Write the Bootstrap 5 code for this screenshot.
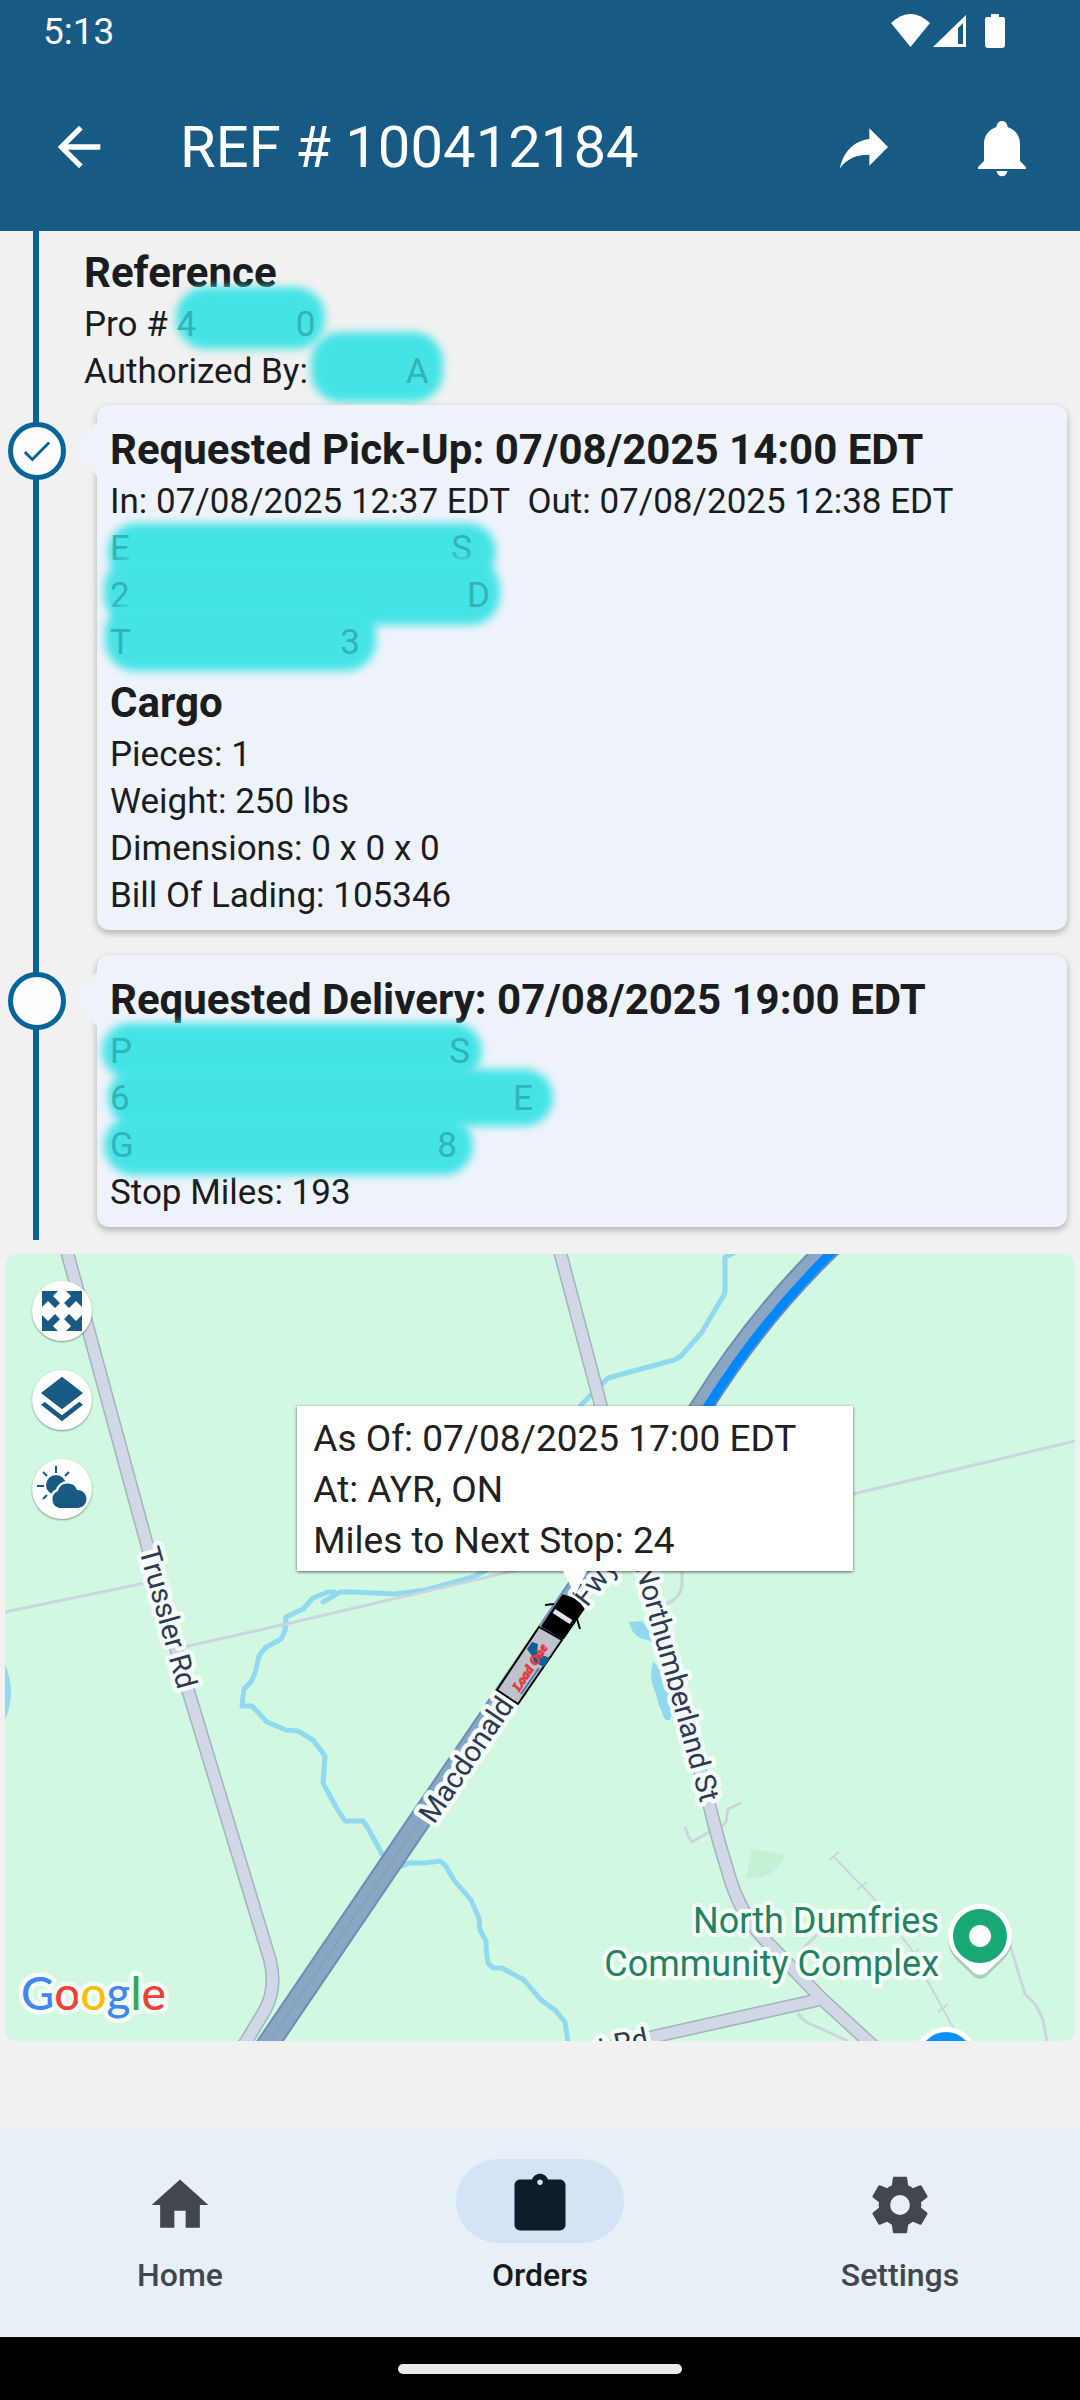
<!DOCTYPE html>
<html lang="en">
<head>
<meta charset="utf-8">
<meta name="viewport" content="width=device-width, initial-scale=1">
<title>REF # 100412184</title>
<link href="https://cdn.jsdelivr.net/npm/bootstrap@5.3.0/dist/css/bootstrap.min.css" rel="stylesheet">
<style>
  :root { --brand: #175a84; --rail: #056599; --ink: #1a1c1e; --smudge: #45e3e6; }
  body { font-family: Roboto, "Noto Sans", sans-serif; font-size: 35px; line-height: 47px; color: var(--ink); background: #f1f1f1; }
  svg { display: block; flex: none; }

  .app-head { background: var(--brand); color: #fff; }
  .status-row { height: 62px; padding: 0 75px 0 43px; font-size: 37px; }
  .tool-row { height: 169px; padding: 0 46px 0 47px; }
  .tool-row h1 { font-size: 58px; line-height: 68px; font-weight: 400; margin-left: 69px; }
  .tool-actions { gap: 74px; }
  .icon-btn { color: inherit; background: none; border: 0; padding: 0; }

  .timeline { position: relative; padding: 13px 13px 13px 0; }
  .timeline::before { content: ""; position: absolute; left: 33px; top: 0; bottom: 0; width: 6px; background: var(--rail); }
  .head-line { font-size: 42px; line-height: 57px; font-weight: 700; margin: 0; }
  .ref-block { padding-left: 84px; margin-bottom: 10px; position: relative; }
  .stop-row + .stop-row { margin-top: 25px; }
  .rail { flex: 0 0 97px; position: relative; padding: 17px 0 0 8px; }
  .node { width: 58px; height: 58px; border: 5px solid var(--rail); border-radius: 50%; background: #fdfcff; color: var(--rail); }
  .stop-card { position: relative; flex: 1; min-width: 0; background: #eef3fa; border-radius: 12px; padding: 16px 13px 11px; box-shadow: 0 3px 7px rgba(0,0,0,.28); }
  .stop-card::before { content: ""; position: absolute; left: -24px; top: 17px; border: solid transparent; border-width: 27px 24px 27px 0; border-right-color: #eef3fa; }
  .cargo { margin-top: 8px; }

  /* marker strokes that cover private values */
  .hidden-value { position: relative; display: inline-flex; justify-content: space-between; vertical-align: top; height: 47px; color: #31b3b8; }
  .hidden-value::before { content: ""; position: absolute; inset: var(--t, -6px) var(--r, -30px) var(--b, -8px) var(--l, -5px); background: var(--smudge); border-radius: 30px; filter: blur(4px); }
  .hidden-value span { position: relative; }
  .w-pro { width: 139px; --t: -14px; --r: -10px; --b: -1px; --l: 0px; }
  .w-auth { width: 112px; --t: -16px; --r: -14px; --b: -7px; --l: -6px; }
  .w-name { width: 362px; --t: -2px; --r: -24px; --b: -8px; --l: -2px; }
  .w-street { width: 380px; --t: -14px; --r: -10px; --b: -6px; --l: -6px; }
  .w-city { width: 250px; --t: -16px; --r: -16px; --b: -5px; --l: -5px; }
  .w-name2 { width: 360px; --t: -5px; --r: -12px; --b: -4px; --l: -8px; }
  .w-street2 { width: 423px; --t: -6px; --r: -20px; --b: -4px; --l: -2px; }
  .w-city2 { width: 347px; --t: -6px; --r: -16px; --b: -6px; --l: -6px; }

  .map-box { position: relative; margin: 14px 5px 0; border-radius: 10px; overflow: hidden; background: #d2f8e2; }
  .map-box > svg { width: 100%; height: auto; }
  .map-tools { position: absolute; left: 27px; top: 27px; gap: 29px; }
  .map-btn { width: 60px; height: 60px; border: 0; padding: 0; border-radius: 50%; background: #fff; color: var(--brand); box-shadow: 0 1px 2px rgba(0,0,0,.4); }
  .callout { position: absolute; left: 53.3%; top: 152px; transform: translateX(-50%); width: 556px; padding: 7px 16px 5px; background: #fff; color: #212121; font-size: 37px; line-height: 51px; box-shadow: 0 1px 3px rgba(0,0,0,.6); }
  .callout::after { content: ""; position: absolute; left: 50%; top: 100%; margin-left: -12px; border: 12px solid transparent; border-top: 24px solid #fff; border-bottom: 0; }
  .road-name { font-size: 29px; fill: #2f3a4f; stroke: #f3fbfb; stroke-width: 9px; stroke-linejoin: round; paint-order: stroke; }
  .place-name { font-size: 36px; fill: #23825f; stroke: #f3fdf8; stroke-width: 8px; stroke-linejoin: round; paint-order: stroke; }
  .brand-name { font-family: Lato, sans-serif; font-size: 46px; font-weight: 500; stroke: #f3fdf8; stroke-width: 9px; stroke-linejoin: round; paint-order: stroke; }
  .truck-name { font: italic 900 13px "Liberation Serif", serif; fill: #e23b40; stroke: #e23b40; stroke-width: 1px; }

  .bottom-nav { background: #e7eff7; padding: 32px 0 38px; margin-top: auto; }
  .bottom-nav a { color: #42474e; text-decoration: none; font-size: 32px; font-weight: 500; line-height: 48px; }
  .bottom-nav a.active { color: #16191c; }
  .pill { width: 168px; height: 84px; border-radius: 42px; padding-top: 8px; margin-bottom: 8px; }
  .active .pill { background: #d4e3f6; color: #0d1d2a; }
  .gesture { background: #000; height: 63px; }
  .gesture div { width: 284px; height: 10px; border-radius: 5px; background: #eaeaea; }
</style>
<script src="https://cdn.jsdelivr.net/npm/bootstrap@5.3.0/dist/js/bootstrap.bundle.min.js"></script>
</head>
<body class="d-flex flex-column min-vh-100">

<header class="app-head">
  <div class="status-row d-flex align-items-center justify-content-between">
    <span>5:13</span>
    <svg width="114" height="34" viewBox="0 0 114 34" fill="#fff" aria-hidden="true">
      <path d="M0 9Q19.500-9 39 9L19.500 33z"/>
      <path fill-rule="evenodd" d="M42 33L75 1v32zM67 14v16h5V9z"/>
      <path d="M100 0h8v3h4q2 0 2 3v25q0 3-3 3H97q-3 0-3-3V6q0-3 2-3h4z"/>
    </svg>
  </div>
  <div class="tool-row d-flex align-items-center">
    <button class="icon-btn" type="button" aria-label="Back"><svg width="64" height="64" viewBox="0 0 24 24" fill="currentColor"><path d="M20 11H7.830l5.590-5.590L12 4l-8 8 8 8 1.410-1.410L7.830 13H20z"/></svg></button>
    <h1 class="mb-0 me-auto">REF # 100412184</h1>
    <div class="tool-actions d-flex">
      <button class="icon-btn" type="button" aria-label="Share"><svg width="64" height="64" viewBox="0 0 24 24" fill="currentColor"><path d="M14 9V5l7 7-7 7v-4.100c-5 0-8.500 1.600-11 5.100 1-5 4-10 11-11z"/></svg></button>
      <button class="icon-btn" type="button" aria-label="Notifications"><svg width="64" height="64" viewBox="-8 -6 64 64" fill="currentColor"><path d="M24 0c3 0 5 2 5.500 5v1C38 9 42 15 42 23v17l6 6v2H0v-2l6-6V23C6 15 10 9 18.500 6V5c.500-3 2.500-5 5.500-5zM18.500 50h11c-1 7-10 7-11 0z"/></svg></button>
    </div>
  </div>
</header>

<main>
  <section class="timeline">
    <div class="ref-block">
      <h2 class="head-line">Reference</h2>
      <div>Pro # <span class="hidden-value w-pro"><span>4</span><span>0</span></span></div>
      <div>Authorized By: <span class="hidden-value w-auth"><span></span><span>A</span></span></div>
    </div>

    <div class="stop-row d-flex">
      <div class="rail">
        <div class="node d-flex align-items-center justify-content-center">
          <svg width="28" height="24" viewBox="0 0 30 24" fill="none" stroke="currentColor" stroke-width="3"><path d="M2 13l8 8L28 3"/></svg>
        </div>
      </div>
      <article class="stop-card">
        <h2 class="head-line">Requested Pick-Up: 07/08/2025 14:00 EDT</h2>
        <div>In: 07/08/2025 12:37 EDT&nbsp; Out: 07/08/2025 12:38 EDT</div>
        <div><span class="hidden-value w-name"><span>E</span><span>S</span></span></div>
        <div><span class="hidden-value w-street"><span>2</span><span>D</span></span></div>
        <div><span class="hidden-value w-city"><span>T</span><span>3</span></span></div>
        <div class="cargo">
          <h3 class="head-line">Cargo</h3>
          <div>Pieces: 1</div>
          <div>Weight: 250 lbs</div>
          <div>Dimensions: 0 x 0 x 0</div>
          <div>Bill Of Lading: 105346</div>
        </div>
      </article>
    </div>

    <div class="stop-row d-flex">
      <div class="rail"><div class="node"></div></div>
      <article class="stop-card">
        <h2 class="head-line">Requested Delivery: 07/08/2025 19:00 EDT</h2>
        <div><span class="hidden-value w-name2"><span>P</span><span>S</span></span></div>
        <div><span class="hidden-value w-street2"><span>6</span><span>E</span></span></div>
        <div><span class="hidden-value w-city2"><span>G</span><span>8</span></span></div>
        <div>Stop Miles: 193</div>
      </article>
    </div>
  </section>

  <section class="map-box" aria-label="Map">
    <svg viewBox="5 1254 1070 787">
      <!-- park and water -->
      <path fill="#c4f0d5" d="M752 1849l33 6q-10 26-39 23z"/>
      <g fill="#90d9ee">
        <path d="M0 1655q11 18 11 37t-11 37z"/>
        <path d="M629 1622l13-1 16 22-18-5q-9-5-11-16z"/>
        <path d="M653 1662l12 10 8 40-3 8q-6 2-8-8-4-8-6-18-8-16-3-32z"/>
      </g>
      <g fill="none" stroke="#90d9ee" stroke-width="5" stroke-linejoin="round" stroke-linecap="round">
        <path d="M736 1252l-11 5v33q0 5-3 8l-20 34-21 24-7 4-66 18-6 6-21 21-80 150-16 16-12 6-47 13-31 4-41-2h-14l-17 10M334 1592l-6 0-15 6-10 11-17 8-1 14-4 8-16 9-6 8-4 17-4 9-7 7-2 17h10l15 16 19 8 12 1 15 9 12 16-2 27 13 24 9 14h18l5 7 14 26 20 12 7-3h16l15-2 5 4 9 15 17 20 8 18 1 12 6 11v7l2 15 5 5h9l22 12 17 20 14 10 10 12 3 20"/>
      </g>
      <!-- minor roads and tracks -->
      <g fill="none" stroke="#c9d6dd" stroke-width="3">
        <path d="M5 1612l140-29M184 1647l102-23 240-56 327-74 222-53M682 1568v17q-2 14-18 20"/>
        <path d="M685 1827l3 9 4 6 17-10M741 1803l-13 6-2 13-7 7M703 1800l7 34M1010 1945l15 49 11 11 7 15 4 21M798 2013q3 6 10 10l16 7 24 11M817 1935l-14 13"/>
        <path stroke-width="2" d="M833 1856l29 30 15 16 25 35 12 16 13 27 16 29 12 22M829 1860l10-8M857 1890l10-8M909 1957l10-8M938 2012l10-8"/>
      </g>
      <!-- side roads -->
      <g fill="none" stroke="#a3b3bd" stroke-width="14">
        <path d="M66 1248l83 304 39 138 82 270q7 28-5 50l-24 40"/>
        <path d="M559 1248l42 158 107 394 11 42 12 40q12 36 36 60l55 57 60 55"/>
        <path d="M822 1999l-170 38-60 14"/>
      </g>
      <g fill="none" stroke="#cfd8e4" stroke-width="11">
        <path d="M66 1248l83 304 39 138 82 270q7 28-5 50l-24 40"/>
        <path d="M559 1248l42 158 107 394 11 42 12 40q12 36 36 60l55 57 60 55"/>
        <path d="M822 1999l-170 38-60 14"/>
      </g>
      <!-- highway and travelled route -->
      <g fill="none">
        <path stroke="#6f8db4" stroke-width="23" d="M264 2050L420 1820 702 1406Q758 1316 833 1244"/>
        <path stroke="#8ba6c3" stroke-width="19" d="M264 2050L420 1820 702 1406Q758 1316 833 1244"/>
        <path stroke="#7d99bb" stroke-width="1" d="M264 2050L420 1820 702 1406"/>
        <path stroke="#0088ff" stroke-width="9" d="M700 1419l10-16Q766 1315 840 1244"/>
      </g>
      <text class="road-name" transform="translate(139 1550) rotate(74.500)">Trussler Rd</text>
      <text class="road-name" transform="translate(635 1567) rotate(74.500)">Northumberland St</text>
      <text class="road-name" transform="translate(434 1825) rotate(-56)">Macdonald</text>
      <text class="road-name" transform="translate(587 1608) rotate(-52)">Fwy</text>
      <text class="road-name" transform="translate(600 2058) rotate(-12)">t Rd</text>
      <!-- truck marker -->
      <g stroke-linejoin="round">
        <path fill="#bfc2ca" stroke="#000" stroke-width="2" d="M539 1627l23 13-44 64-21-14z"/>
        <path fill="#000" stroke="#000" stroke-width="3" d="M563 1596q14 3 20 13l-20 29-20-12z"/>
        <path stroke="#000" stroke-width="2" d="M545 1605l9-1M577 1619l3 10"/>
        <path stroke="#e2e6f2" stroke-width="5" d="M554 1611l17 11"/>
        <path fill="#115f95" d="M527 1649l5-7 6 2-1 9 5 2 8 3-6 9-10-5-2-6z"/>
        <path fill="none" stroke="#3f7fa8" stroke-width="2" d="M521 1694l18-26"/>
        <text class="truck-name" transform="translate(519 1692) rotate(-57)">Load One</text>
      </g>
      <!-- places -->
      <g class="place-name" text-anchor="end">
        <text x="939" y="1933">North Dumfries</text>
        <text x="939" y="1976">Community Complex</text>
      </g>
      <path fill="#8fb5a2" opacity=".6" d="M980 1908a32 32 0 0 1 32 32c0 14-10 21-19 30l-6 6q-7 6-14 0l-6-6c-9-9-19-16-19-30a32 32 0 0 1 32-32z"/>
      <path fill="#fff" d="M980 1904a32 32 0 0 1 32 32c0 14-8 20-16 27l-9 9q-7 6-14 0l-9-9c-8-7-16-13-16-27a32 32 0 0 1 32-32z"/>
      <circle cx="980" cy="1936" r="27" fill="#18a873"/><circle cx="980" cy="1936" r="11" fill="#fff"/>
      <circle cx="946" cy="2059" r="32" fill="#fff"/><circle cx="946" cy="2059" r="27" fill="#0a90ff"/>
      <text class="brand-name" x="21" y="2010"><tspan fill="#4285f4">G</tspan><tspan fill="#ea4335">o</tspan><tspan fill="#fbbc04">o</tspan><tspan fill="#4285f4">g</tspan><tspan fill="#34a853">l</tspan><tspan fill="#ea4335">e</tspan></text>
    </svg>

    <div class="map-tools d-flex flex-column">
      <button class="map-btn d-flex align-items-center justify-content-center" type="button" aria-label="Full screen"><svg width="40" height="40" viewBox="0 0 40 40" fill="currentColor"><path id="corner" d="M0 0h16l-5 5 7 7-5 5-7-7-6 6z"/><use href="#corner" transform="translate(40) scale(-1 1)"/><use href="#corner" transform="translate(0 40) scale(1 -1)"/><use href="#corner" transform="translate(40 40) scale(-1 -1)"/></svg></button>
      <button class="map-btn d-flex align-items-center justify-content-center" type="button" aria-label="Layers"><svg width="56" height="56" viewBox="0 0 24 24" fill="currentColor"><path d="M11.990 18.540l-7.370-5.730L3 14.070l9 7 9-7-1.630-1.270zM12 16l7.360-5.730L21 9l-9-7-9 7 1.630 1.270z"/></svg></button>
      <button class="map-btn d-flex align-items-center justify-content-center" type="button" aria-label="Weather"><svg width="60" height="60" viewBox="0 0 60 60" fill="currentColor"><circle cx="24" cy="26" r="10"/><path stroke="currentColor" stroke-width="2" d="M24 7v7M11 13l4 4M37 13l-4 4M5 27h7M11 40l4-4"/><path stroke="#fff" stroke-width="5" paint-order="stroke" d="M27 49a9 9 0 0 1-1-17 10 10 0 0 1 19-1 9 9 0 0 1 1 18z"/></svg></button>
    </div>

    <div class="callout">
      <div>As Of: 07/08/2025 17:00 EDT</div>
      <div>At: AYR, ON</div>
      <div>Miles to Next Stop: 24</div>
    </div>
  </section>
</main>

<nav class="bottom-nav d-flex" aria-label="Main">
  <a class="flex-fill w-100 d-flex flex-column align-items-center" href="#home">
    <span class="pill d-flex align-items-center justify-content-center"><svg width="68" height="68" viewBox="0 0 24 24" fill="currentColor"><path d="M10 20v-6h4v6h5v-8h3L12 3 2 12h3v8z"/></svg></span>Home</a>
  <a class="flex-fill w-100 d-flex flex-column align-items-center active" href="#orders" aria-current="page">
    <span class="pill d-flex align-items-center justify-content-center"><svg width="68" height="68" viewBox="0 0 24 24" fill="currentColor"><path d="M19 3h-4.180C14.400 1.840 13.300 1 12 1s-2.400.840-2.820 2H5c-1.100 0-2 .900-2 2v14c0 1.100.900 2 2 2h14c1.100 0 2-.900 2-2V5c0-1.100-.900-2-2-2zm-7 0c.550 0 1 .450 1 1s-.450 1-1 1-1-.450-1-1 .450-1 1-1z"/></svg></span>Orders</a>
  <a class="flex-fill w-100 d-flex flex-column align-items-center" href="#settings">
    <span class="pill d-flex align-items-center justify-content-center"><svg width="68" height="68" viewBox="0 0 24 24" fill="currentColor"><path d="M12 15.500A3.500 3.500 0 0 1 8.500 12 3.500 3.500 0 0 1 12 8.500a3.500 3.500 0 0 1 3.500 3.500 3.500 3.500 0 0 1-3.500 3.500m7.430-2.530c.040-.320.070-.640.070-.970s-.030-.660-.070-1l2.110-1.630c.190-.150.240-.420.120-.640l-2-3.460c-.120-.220-.390-.310-.610-.220l-2.490 1c-.520-.390-1.060-.730-1.690-.980l-.370-2.650A.506.506 0 0 0 14 2h-4c-.250 0-.460.180-.500.420l-.370 2.650c-.630.250-1.170.590-1.690.980l-2.490-1c-.220-.090-.490 0-.610.220l-2 3.460c-.130.220-.070.490.120.640L4.570 11c-.040.340-.070.670-.070 1s.030.650.070.970l-2.110 1.660c-.190.150-.250.420-.120.640l2 3.460c.120.220.390.300.610.220l2.490-1.010c.520.400 1.060.740 1.690.990l.370 2.650c.040.240.250.420.500.420h4c.250 0 .460-.180.500-.420l.370-2.650c.630-.260 1.170-.590 1.690-.990l2.490 1.010c.220.080.490 0 .610-.220l2-3.460c.120-.220.070-.490-.120-.640z"/></svg></span>Settings</a>
</nav>
<div class="gesture d-flex align-items-center justify-content-center"><div></div></div>
</body>
</html>
